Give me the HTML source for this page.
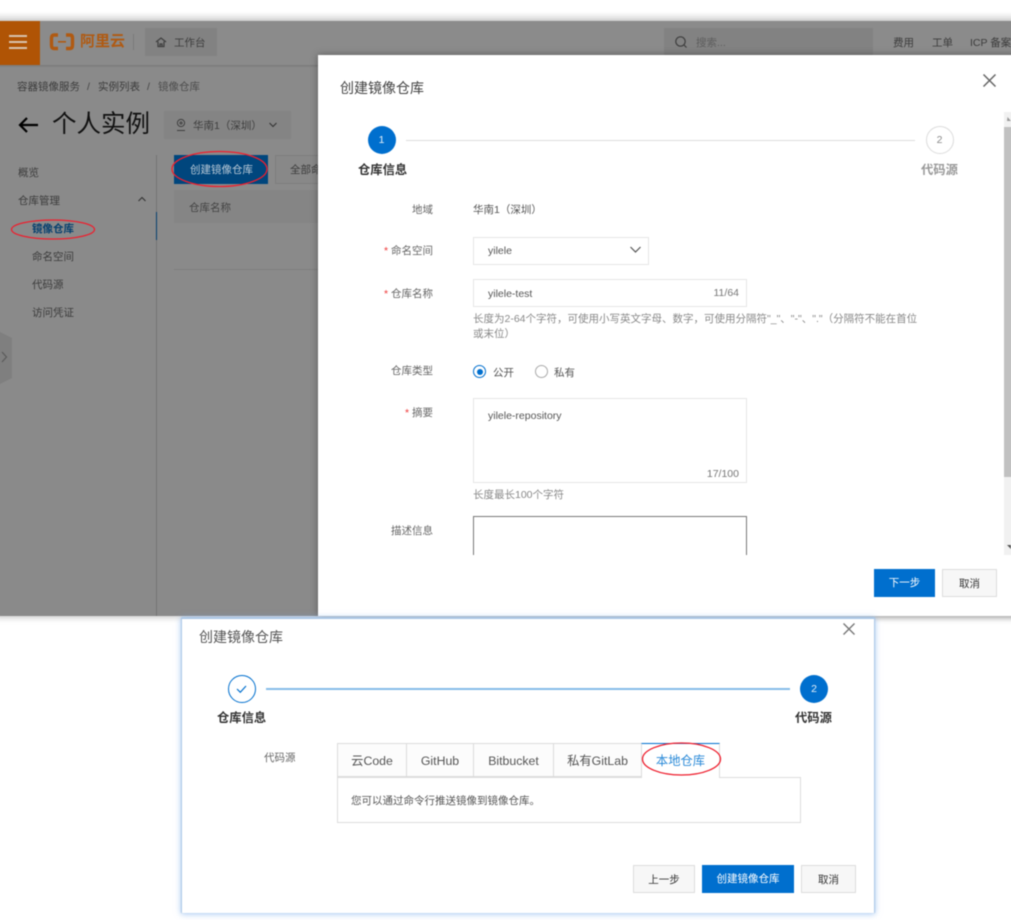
<!DOCTYPE html>
<html lang="zh"><head><meta charset="utf-8"><title>创建镜像仓库</title>
<style>
html,body{margin:0;padding:0;background:#fff}
#o{position:relative;width:1011px;height:920px;overflow:hidden;background:#fff}
#p{position:absolute;left:0;top:0;width:1011px;height:920px;font-family:"Liberation Sans","Noto Sans CJK SC",sans-serif;font-size:10.5px;color:#333;filter:blur(.4px)}
.b,.t,svg{position:absolute}
.b{box-sizing:border-box}
.t{white-space:nowrap;line-height:14px;height:14px;margin-top:1px}
.d{color:#3c3c3c}
.r{text-align:right}
.l{color:#666;width:80px;text-align:right;left:353px}
.s{color:#e33;}
.v{color:#555}
.h{color:#999}
.i{border:1px solid #e6e6e6;background:#fff}
.btn{text-align:center;line-height:29px;height:28px}
.w{background:#f7f7f7;border:1px solid #ddd;color:#333}
.pr{background:#006fce;color:#fff}
.st{font-weight:700;font-size:12.3px;line-height:16px;height:16px}
.tab{top:743px;height:34px;border:1px solid #dcdcdc;background:#fcfcfc;color:#555;font-size:12.3px;line-height:35px;text-align:center}
.x{margin-top:0}
</style></head><body><div id="o"><div id="p">

<!-- gray console backdrop -->
<div class="b" style="left:-6px;top:12px;width:1023px;height:9px;background:linear-gradient(#fff,#d8d8d8)"></div>
<div class="b" style="left:-6px;top:21px;width:1023px;height:595px;background:#8a8a8a;box-shadow:0 2px 6px rgba(0,0,0,.2)"></div>
<div class="b" style="left:-6px;top:21px;width:1023px;height:44px;background:#8b8b8b;box-shadow:0 1px 2px rgba(0,0,0,.15)"></div>
<div class="b" style="left:-6px;top:21px;width:46px;height:44px;background:#b05405"></div>
<div class="b" style="left:9px;top:35px;width:18px;height:1.5px;background:#d9c3ae"></div>
<div class="b" style="left:9px;top:41px;width:18px;height:1.5px;background:#d9c3ae"></div>
<div class="b" style="left:9px;top:47px;width:18px;height:1.5px;background:#d9c3ae"></div>
<svg style="left:49px;top:33px" width="27" height="18" viewBox="0 0 27 18" fill="none" stroke="#b05a12" stroke-width="3.4"><path d="M9 2H5Q2.5 2 2.5 5V12Q2.5 15.5 5 15.5H9M17 2H21Q23.5 2 23.5 5V12Q23.5 15.5 21 15.5H17"/><path d="M9 8.8H17" stroke-width="1.6"/></svg>
<div class="t x" style="left:80px;top:33px;height:18px;line-height:18px;font-size:15px;font-weight:700;color:#b05a12">阿里云</div>
<div class="b" style="left:133px;top:34px;width:1px;height:16px;background:#7a7a7a"></div>
<div class="b" style="left:145px;top:28px;width:72px;height:28px;background:#828282"></div>
<svg style="left:155px;top:36px" width="12" height="12" viewBox="0 0 12 12" fill="none" stroke="#3e3e3e" stroke-width="1.2"><path d="M1 6L6 2L11 6M3 5.5V10.5H9V5.5M5 10.5V8H7V10.5"/></svg>
<div class="t" style="left:174px;top:35px;color:#3e3e3e">工作台</div>
<div class="b" style="left:664px;top:28px;width:209px;height:28px;background:#828282"></div>
<svg style="left:674px;top:35px" width="14" height="14" viewBox="0 0 14 14" fill="none" stroke="#3e3e3e" stroke-width="1.2"><circle cx="6.5" cy="6.5" r="4.7"/><path d="M10 10L12.5 12.5"/></svg>
<div class="t" style="left:696px;top:35px;color:#5d5d5d">搜索...</div>
<div class="t d" style="left:893px;top:35px">费用</div>
<div class="t d" style="left:932px;top:35px">工单</div>
<div class="t d" style="left:970px;top:35px">ICP 备案</div>

<div class="t d" style="left:17px;top:79px">容器镜像服务</div>
<div class="t" style="left:87px;top:79px;color:#444">/</div>
<div class="t d" style="left:98px;top:79px">实例列表</div>
<div class="t" style="left:147px;top:79px;color:#444">/</div>
<div class="t" style="left:158px;top:79px;color:#4d4d4d">镜像仓库</div>
<svg style="left:17px;top:115px" width="22" height="20" viewBox="0 0 22 20" fill="none" stroke="#000" stroke-width="2.2"><path d="M21 10H3M10 3L3 10L10 17"/></svg>
<div class="t x" style="left:52px;top:109px;height:32px;line-height:32px;font-size:24.5px;color:#111">个人实例</div>
<div class="b" style="left:164px;top:111px;width:127px;height:28px;background:#848484"></div>
<svg style="left:175px;top:118px" width="12" height="14" viewBox="0 0 12 14" fill="none" stroke="#3e3e3e"><circle cx="6" cy="5" r="3.6"/><circle cx="6" cy="5" r="1"/><path d="M2 12.5H10"/></svg>
<div class="t" style="left:193px;top:118px;color:#3e3e3e">华南1（深圳）</div>
<svg style="left:268px;top:121px" width="10" height="8" viewBox="0 0 10 8" fill="none" stroke="#333" stroke-width="1.1"><path d="M1.5 2L5 5.5L8.5 2"/></svg>

<div class="t d" style="left:18px;top:165px">概览</div>
<div class="t d" style="left:18px;top:193px">仓库管理</div>
<svg style="left:137px;top:195px" width="10" height="8" viewBox="0 0 10 8" fill="none" stroke="#333" stroke-width="1.1"><path d="M1.5 6L5 2.5L8.5 6"/></svg>
<div class="t" style="left:32px;top:221px;color:#06406f;font-weight:700">镜像仓库</div>
<div class="t d" style="left:32px;top:249px">命名空间</div>
<div class="t d" style="left:32px;top:277px">代码源</div>
<div class="t d" style="left:32px;top:305px">访问凭证</div>
<div class="b" style="left:156px;top:155px;width:1px;height:461px;background:#747474"></div>
<div class="b" style="left:155.5px;top:212px;width:1.5px;height:28px;background:#06406f"></div>
<svg style="left:-6px;top:332px" width="19" height="52" viewBox="-6 0 19 52"><path d="M-6 0H0L12 6V46L0 52H-6Z" fill="#7f7f7f"/><path d="M2 20L6.5 25L2 30" fill="none" stroke="#5a5a5a" stroke-width="1.2"/></svg>

<div class="b" style="left:174px;top:155px;width:94px;height:29px;background:#00467d"></div>
<div class="t" style="left:190px;top:162px;color:#b9c9d6">创建镜像仓库</div>
<div class="b" style="left:275px;top:155px;width:50px;height:29px;border:1px solid #7e7e7e;background:#888"></div>
<div class="t d" style="left:290px;top:162px">全部命</div>
<div class="b" style="left:174px;top:190px;width:150px;height:33px;background:#858585"></div>
<div class="t" style="left:189px;top:200px;color:#444">仓库名称</div>
<div class="b" style="left:174px;top:269px;width:150px;height:1px;background:#7e7e7e"></div>

<!-- modal 1 -->
<div class="b" style="left:318px;top:55px;width:699px;height:561px;background:#fff;box-shadow:0 0 7px rgba(0,0,0,.35)"></div>
<div class="t x" style="left:340px;top:79px;height:18px;line-height:18px;font-size:14px;color:#444">创建镜像仓库</div>
<svg style="left:982px;top:73px" width="15" height="15" viewBox="0 0 15 15" fill="none" stroke="#666" stroke-width="1.5"><path d="M1.5 1.5L13.5 13.5M13.5 1.5L1.5 13.5"/></svg>
<div class="b" style="left:1004px;top:112px;width:13px;height:443px;background:#f1f1f1"></div>
<div class="b" style="left:1004px;top:127px;width:13px;height:350px;background:#c1c1c1"></div>
<svg style="left:1004px;top:115px" width="7" height="8" viewBox="0 0 7 8"><path d="M3.5 2L7 6H3Z" fill="#999"/></svg>
<svg style="left:1004px;top:543px" width="7" height="8" viewBox="0 0 7 8"><path d="M3 2H7V6Z" fill="#555"/></svg>

<div class="b" style="left:367.5px;top:126px;width:28px;height:28px;border-radius:50%;background:#006fce"></div>
<div class="t x" style="left:367.5px;top:133px;width:28px;text-align:center;color:#e6f1fa">1</div>
<div class="b" style="left:406px;top:140px;width:509px;height:1px;background:#dcdcdc"></div>
<div class="b" style="left:925.5px;top:126px;width:28px;height:28px;border-radius:50%;border:1px solid #dcdcdc;background:#fff"></div>
<div class="t x" style="left:925.5px;top:133px;width:28px;text-align:center;color:#888">2</div>
<div class="t st" style="left:358px;top:161px;color:#333">仓库信息</div>
<div class="t st" style="left:921px;top:161px;color:#999">代码源</div>

<div class="t l" style="top:202px">地域</div>
<div class="t v" style="left:473px;top:202px">华南1（深圳）</div>
<div class="t l" style="top:243px"><span class="s">* </span>命名空间</div>
<div class="b i" style="left:473px;top:237px;width:176px;height:28px"></div>
<div class="t v" style="left:488px;top:243px">yilele</div>
<svg style="left:629px;top:245px" width="13" height="10" viewBox="0 0 13 10" fill="none" stroke="#555" stroke-width="1.2"><path d="M1.5 2L6.5 7L11.5 2"/></svg>
<div class="t l" style="top:286px"><span class="s">* </span>仓库名称</div>
<div class="b i" style="left:473px;top:279px;width:274px;height:28px"></div>
<div class="t v" style="left:488px;top:286px">yilele-test</div>
<div class="t r h" style="left:689px;top:285px;width:50px;color:#777">11/64</div>
<div class="t h" style="left:473px;top:311px;color:#888">长度为2-64个字符，可使用小写英文字母、数字，可使用分隔符"_"、"-"、"."（分隔符不能在首位</div>
<div class="t h" style="left:473px;top:326px;color:#888">或末位）</div>

<div class="t l" style="top:363px">仓库类型</div>
<div class="b" style="left:473px;top:365px;width:13px;height:13px;border-radius:50%;border:1px solid #006fce;background:#fff"></div>
<div class="b" style="left:476.5px;top:368.5px;width:6px;height:6px;border-radius:50%;background:#006fce"></div>
<div class="t v" style="left:493px;top:365px">公开</div>
<div class="b" style="left:535px;top:365px;width:13px;height:13px;border-radius:50%;border:1px solid #aaa;background:#fff"></div>
<div class="t v" style="left:554px;top:365px">私有</div>

<div class="t l" style="top:405px"><span class="s">* </span>摘要</div>
<div class="b i" style="left:473px;top:398px;width:274px;height:85px"></div>
<div class="t v" style="left:488px;top:408px">yilele-repository</div>
<div class="t r" style="left:679px;top:466px;width:60px;color:#777">17/100</div>
<div class="t" style="left:473px;top:487px;color:#888">长度最长100个字符</div>
<div class="t l" style="top:523px">描述信息</div>
<div class="b" style="left:473px;top:516px;width:274px;height:39px;border:1px solid #777;border-bottom:0;background:#fff"></div>

<div class="b btn pr" style="left:874px;top:569px;width:61px">下一步</div>
<div class="b btn w" style="left:942px;top:569px;width:55px">取消</div>

<!-- red ellipses -->
<svg style="left:0;top:140px" width="320" height="110" viewBox="0 0 320 110" fill="none" stroke="#ee1f2e" stroke-width="1.3"><ellipse cx="219.5" cy="29" rx="47.5" ry="17.5"/><ellipse cx="53" cy="89.5" rx="41.5" ry="9.5"/></svg>

<!-- dialog 2 -->
<div class="b" style="left:182px;top:619px;width:692px;height:294px;background:#fff;box-shadow:0 -1px 1px 1px #a9c6e6,0 0 6px 1px rgba(110,165,235,.6)"></div>
<div class="t x" style="left:199px;top:628px;height:18px;line-height:18px;font-size:14px;color:#555">创建镜像仓库</div>
<svg style="left:842px;top:622px" width="14" height="14" viewBox="0 0 14 14" fill="none" stroke="#777" stroke-width="1.4"><path d="M1.5 1.5L12.5 12.5M12.5 1.5L1.5 12.5"/></svg>
<div class="b" style="left:227.5px;top:675px;width:28px;height:28px;border-radius:50%;border:1px solid #006fce;background:#fff"></div>
<svg style="left:235px;top:683px" width="13" height="12" viewBox="0 0 13 12" fill="none" stroke="#006fce" stroke-width="1.2"><path d="M2 6L5.3 9.3L11 3"/></svg>
<div class="b" style="left:266px;top:688px;width:524px;height:1.5px;background:#86bde8"></div>
<div class="b" style="left:800px;top:675px;width:28px;height:28px;border-radius:50%;background:#006fce"></div>
<div class="t x" style="left:800px;top:682px;width:28px;text-align:center;color:#e6f1fa">2</div>
<div class="t st" style="left:217px;top:709px;color:#333">仓库信息</div>
<div class="t st" style="left:795px;top:709px;color:#333">代码源</div>
<div class="t" style="left:264px;top:750px;color:#666">代码源</div>

<div class="b tab" style="left:337px;width:70px">云Code</div>
<div class="b tab" style="left:407px;width:67px;border-left:0">GitHub</div>
<div class="b tab" style="left:474px;width:80px;border-left:0">Bitbucket</div>
<div class="b tab" style="left:553px;width:89px;border-left:1px solid #dcdcdc">私有GitLab</div>
<div class="b" style="left:337px;top:777px;width:464px;height:46px;border:1px solid #dcdcdc;background:#fff"></div>
<div class="b tab" style="left:641px;width:79px;height:35px;background:#fff;color:#2a8ad8;border-top:1.5px solid #006fce;border-bottom:0">本地仓库</div>
<div class="t" style="left:351px;top:793px;color:#555">您可以通过命令行推送镜像到镜像仓库。</div>
<svg style="left:640px;top:741px" width="84" height="37" viewBox="0 0 84 37" fill="none" stroke="#ee1f2e" stroke-width="1.3"><ellipse cx="41.5" cy="18" rx="39" ry="16"/></svg>

<div class="b btn w" style="left:633px;top:865px;width:62px">上一步</div>
<div class="b btn pr" style="left:702px;top:865px;width:92px">创建镜像仓库</div>
<div class="b btn w" style="left:801px;top:865px;width:55px">取消</div>
</div></div></body></html>
